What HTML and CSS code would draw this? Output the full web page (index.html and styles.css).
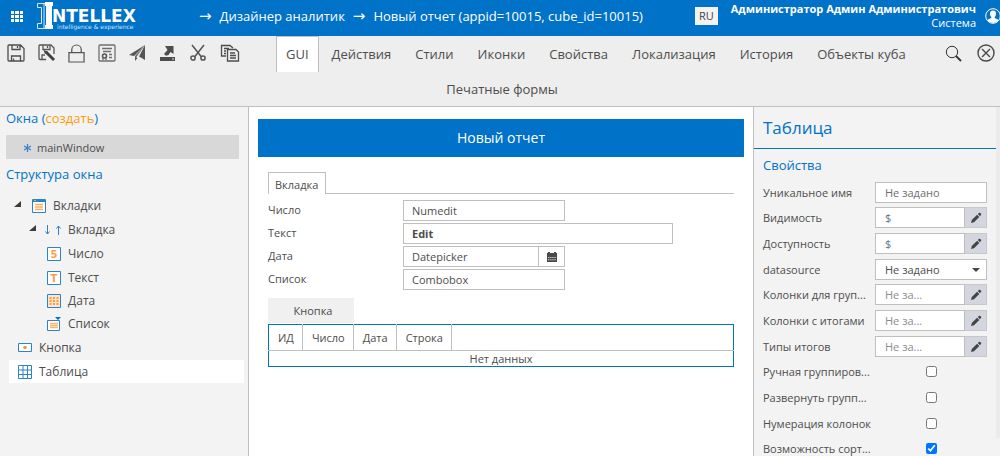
FILE: index.html
```html
<!DOCTYPE html>
<html lang="ru">
<head>
<meta charset="utf-8">
<title>Дизайнер аналитик</title>
<link rel="stylesheet" href="styles.css">
</head>
<body>
<svg width="0" height="0" class="defs" aria-hidden="true">
  <symbol id="pencil" viewBox="0 0 12 12"><path d="M1 11l.8-3 5.3-5.3 2.2 2.2L4 10.2zM7.8 2l1.4-1.2q.6-.3 1 .1l.9.9q.4.5 0 1L9.9 4.2z" fill="#444"/></symbol>
  <symbol id="caret" viewBox="0 0 8 8"><path d="M7 1v6H0z" fill="#3c3c3c"/></symbol>
</svg>
<div class="app">
  <header class="header">
    <button class="apps" aria-label="Меню">
      <svg width="13" height="11" viewBox="0 0 13 11" fill="#fff"><path d="M0 0h3v3H0zM4 0h4v3H4zM9 0h3v3H9zM0 4h3v3H0zM4 4h4v3H4zM9 4h3v3H9zM0 8h3v3H0zM4 8h4v3H4zM9 8h3v3H9z"/></svg>
    </button>
    <svg class="logo" width="104" height="30" viewBox="0 0 104 30">
      <path d="M9 2.500H.500V6.500H4.500V22.500H.500V27.500H9M7 3V27" fill="none" stroke="#d6e8f7"/>
      <path d="M8 1H16V5H15V24H16V28H8V24H9V5H8z" fill="#fff"/>
      <text x="15" y="21" class="logo-name">NTELLEX</text>
      <text x="20" y="28" class="logo-sub">intelligence &amp; experience</text>
    </svg>
    <nav class="crumbs"><span class="arrow">→</span><a href="#">Дизайнер аналитик</a><span class="arrow">→</span><a href="#">Новый отчет (appid=10015, cube_id=10015)</a></nav>
    <button class="lang">RU</button>
    <div class="user"><strong>Администратор Админ Администратович</strong><span>Система</span></div>
    <svg class="avatar" width="16" height="16" viewBox="0 0 16 16"><circle cx="8" cy="8" r="7.300" fill="none" stroke="#fff"/><path d="M8 2.500c2.200 0 3.200 1.500 3 3.500-.1 1.500-.8 2.600-1.300 3v1c1.500.8 3.300.9 3.900 2.300A7 7 0 0 1 8 15a7 7 0 0 1-5.600-2.700C3 10.900 4.800 10.800 6.300 10V9C5.800 8.600 5.100 7.500 5 6c-.2-2 .8-3.500 3-3.500z" fill="#fff"/></svg>
  </header>

  <div class="toolbar">
    <div class="tools">
      <button aria-label="Сохранить"><svg width="18" height="18" viewBox="0 0 18 18" fill="none" stroke="#4d4d4d" stroke-width="1.300"><path d="M2 1h11.500L17 4.500V16q0 1-1 1H2q-1 0-1-1V2q0-1 1-1zM5 1v4.500h8V1M10.500 2v2M4.500 17v-5h9v5M6.500 14.500v2"/></svg></button>
      <button aria-label="Сохранить как"><svg width="18" height="18" viewBox="0 0 18 18" fill="none" stroke="#555" stroke-width="1.300"><path d="M8 15.500H2q-1 0-1-1V2q0-1 1-1h11l3 3v6M5 1v4.500h7V1M9.500 2v2M4 15v-4h3"/><path d="M8 8l8 8" stroke="#404040" stroke-width="3"/><path d="M5.500 6l4 1.500L7 10z" fill="#404040" stroke="none"/></svg></button>
      <button aria-label="Блокировка"><svg width="17" height="19" viewBox="0 0 18 20" fill="none" stroke="#555" stroke-width="1.300"><path d="M1 9h16v10H1zM4 9V6a5 5 0 0 1 10 0V9"/></svg></button>
      <button aria-label="Сертификат"><svg width="18" height="18" viewBox="0 0 18 18" fill="none" stroke="#707070" stroke-width="1.300"><rect x="1" y="1" width="16" height="16" rx="1"/><path d="M4 4.500h10M5 7.500h8M11 10.500h3M11 13.500h3M5 14v2M8 14v2"/><circle cx="6.500" cy="12" r="2" stroke="#555" stroke-width="1.600"/></svg></button>
      <button aria-label="Отправить"><svg width="18" height="18" viewBox="0 0 18 18" fill="#555"><path d="M17 1v15l-6-3.500L17 1zM17 1L1 11l5 1zM7 12.500V17l2.500-3z"/><path d="M17 1L7 12v3z" fill="#6b6b6b"/></svg></button>
      <button aria-label="Выгрузить"><svg width="18" height="18" viewBox="0 0 18 18" fill="#4d4d4d"><path d="M1 13h15v4H1z"/><path d="M6 2h8.500v8l-3-2-2 3-2.500.8L5 10l3.500-4z"/><path d="M13 15h2" stroke="#ddd"/></svg></button>
      <button aria-label="Вырезать"><svg width="18" height="18" viewBox="0 0 18 18" fill="none" stroke="#555" stroke-width="1.500"><path d="M3 1l9.500 12M15 1L5.500 13"/><circle cx="4" cy="14" r="2.100"/><circle cx="14" cy="14" r="2.100"/></svg></button>
      <button aria-label="Копировать"><svg width="20" height="18" viewBox="0 0 20 18" fill="none" stroke="#4d4d4d" stroke-width="1.300"><path d="M6 12H1.500V1.500H10L13 4M4 4.500h5M4 7h2M4 9.500h2"/><path d="M7.500 5.500H16L18.500 8v9h-11zM10 9h5M10 11.500h6M10 14h6"/></svg></button>
    </div>
    <nav class="tabs">
      <a class="active" href="#">GUI</a><a href="#">Действия</a><a href="#">Стили</a><a href="#">Иконки</a><a href="#">Свойства</a><a href="#">Локализация</a><a href="#">История</a><a href="#">Объекты куба</a>
    </nav>
    <div class="actions">
      <button aria-label="Поиск"><svg width="17" height="17" viewBox="0 0 17 17" fill="none" stroke="#333"><circle cx="7" cy="7" r="5.700"/><path d="M11 11l5 5" stroke-width="1.800"/></svg></button>
      <button aria-label="Закрыть"><svg width="18" height="18" viewBox="0 0 18 18" fill="none" stroke="#4a4a4a" stroke-width="1.400"><circle cx="9" cy="9" r="8"/><path d="M5 5l8 8M13 5l-8 8"/></svg></button>
    </div>
    <nav class="tabs second"><a href="#">Печатные формы</a></nav>
  </div>

  <div class="body">
    <aside class="left">
      <h2>Окна (<a href="#">создать</a>)</h2>
      <div class="window"><svg width="7" height="8" viewBox="0 0 7 8"><path d="M3.500 0v8M0 2l7 4M7 2L0 6" stroke="#3d86cc" stroke-width="1.300"/></svg>mainWindow</div>
      <h2>Структура окна</h2>
      <ul class="tree">
        <li><div class="node"><svg class="fold" width="8" height="8"><use href="#caret"/></svg><svg width="14" height="14" viewBox="0 0 14 14"><path d="M.500.500h13v13H.500z" fill="#fff" stroke="#2a83cb"/><path d="M1 1h12v2H1z" fill="#2a83cb"/><path d="M2 1h2v1H2z" fill="#ffa63d"/><path d="M3 5.500h8M3 8h8M3 10.500h8" stroke="#ffad5c" stroke-width="1.500"/></svg>Вкладки</div>
          <ul>
            <li><div class="node"><svg class="fold" width="8" height="8"><use href="#caret"/></svg><svg width="16" height="10" viewBox="0 0 16 10" fill="none" stroke="#2a83cb"><path d="M2.500 0v9M.500 6.500l2 2.500 2-2.500M13.500 10V1M11.500 3.500l2-2.500 2 2.500"/></svg>Вкладка</div>
              <ul class="leaves">
                <li><div class="node"><svg width="14" height="14" viewBox="0 0 14 14"><path d="M.500.500h13v13H.500z" fill="#fff" stroke="#2a83cb"/><text x="7" y="11" class="glyph">5</text></svg>Число</div></li>
                <li><div class="node"><svg width="14" height="14" viewBox="0 0 14 14"><path d="M.500.500h13v13H.500z" fill="#fff" stroke="#2a83cb"/><text x="7" y="11" class="glyph">T</text></svg>Текст</div></li>
                <li><div class="node"><svg width="14" height="14" viewBox="0 0 14 14"><path d="M.500.500h13v13H.500z" fill="#ffe6cf" stroke="#2a83cb"/><path d="M2.500 4h9M2.500 7h9M2.500 10h9" stroke="#ff9a3d" stroke-width="2" stroke-dasharray="2 1.500"/></svg>Дата</div></li>
                <li><div class="node"><svg width="14" height="14" viewBox="0 0 14 14"><path d="M.500 3.500h12v10H.500z" fill="#fff" stroke="#2a83cb"/><path d="M8 0h6l-3 3z" fill="#0070c8"/><path d="M3 6.500h8M3 8.500h8M3 10.500h8" stroke="#ffb56b" stroke-width="1.500"/></svg>Список</div></li>
              </ul>
            </li>
          </ul>
        </li>
        <li><div class="node"><svg width="14" height="10" viewBox="0 0 14 10"><path d="M.500.500h13v8H.500z" fill="#fff" stroke="#2a83cb"/><circle cx="7" cy="4.500" r="1.800" fill="#ff9332"/></svg>Кнопка</div></li>
        <li><div class="node selected"><svg width="14" height="14" viewBox="0 0 14 14"><path d="M.500.500h13v13H.500zM5 0v14M9.500 0v14M0 5h14M0 9.500h14" fill="none" stroke="#2a83cb"/></svg>Таблица</div></li>
      </ul>
    </aside>

    <main class="center">
      <h1>Новый отчет</h1>
      <div class="form">
        <div class="form-tabs"><button>Вкладка</button></div>
        <div class="fields">
          <label for="num">Число</label><input id="num" value="Numedit">
          <label for="txt">Текст</label><input id="txt" class="wide" value="Edit">
          <label for="date">Дата</label><div class="date"><input id="date" value="Datepicker"><button aria-label="Календарь"><svg width="10" height="10" viewBox="0 0 10 10"><path d="M0 1h1V0h2v1h4V0h2v1h1v9H0z" fill="#4a4a4a"/><path d="M1 5.500h8M1 7.800h8" stroke="#fff" stroke-width=".7" stroke-dasharray="1.500 .6"/></svg></button></div>
          <label for="combo">Список</label><input id="combo" value="Combobox">
        </div>
        <button class="push">Кнопка</button>
        <table class="grid">
          <thead><tr><th>ИД</th><th>Число</th><th>Дата</th><th>Строка</th><th class="rest"></th></tr></thead>
          <tbody><tr><td colspan="5">Нет данных</td></tr></tbody>
        </table>
      </div>
    </main>

    <aside class="right">
      <div class="props">
        <h2>Таблица</h2>
        <h3>Свойства</h3>
        <div class="rows">
          <div class="row"><label for="p1">Уникальное имя</label><div class="ctl"><input id="p1" placeholder="Не задано"></div></div>
          <div class="row"><label for="p2">Видимость</label><div class="ctl"><input id="p2" class="money" value="$"><button aria-label="Изменить"><svg width="12" height="12"><use href="#pencil"/></svg></button></div></div>
          <div class="row"><label for="p3">Доступность</label><div class="ctl"><input id="p3" class="money" value="$"><button aria-label="Изменить"><svg width="12" height="12"><use href="#pencil"/></svg></button></div></div>
          <div class="row"><label for="p4">datasource</label><div class="ctl"><select id="p4"><option>Не задано</option></select></div></div>
          <div class="row"><label for="p5">Колонки для груп...</label><div class="ctl"><input id="p5" class="soft" placeholder="Не за..."><button aria-label="Изменить"><svg width="12" height="12"><use href="#pencil"/></svg></button></div></div>
          <div class="row"><label for="p6">Колонки с итогами</label><div class="ctl"><input id="p6" class="soft" placeholder="Не за..."><button aria-label="Изменить"><svg width="12" height="12"><use href="#pencil"/></svg></button></div></div>
          <div class="row"><label for="p7">Типы итогов</label><div class="ctl"><input id="p7" class="soft" placeholder="Не за..."><button aria-label="Изменить"><svg width="12" height="12"><use href="#pencil"/></svg></button></div></div>
          <div class="row"><label for="p8">Ручная группиров...</label><div class="ctl"><input id="p8" type="checkbox"></div></div>
          <div class="row"><label for="p9">Развернуть групп...</label><div class="ctl"><input id="p9" type="checkbox"></div></div>
          <div class="row"><label for="p10">Нумерация колонок</label><div class="ctl"><input id="p10" type="checkbox"></div></div>
          <div class="row"><label for="p11">Возможность сорт...</label><div class="ctl"><input id="p11" type="checkbox" checked></div></div>
        </div>
      </div>
      <div class="track"></div>
    </aside>
  </div>
</div>
</body>
</html>
```
FILE: styles.css
```css
* { box-sizing: border-box; }
body { margin: 0; font: 12px/16px "Open Sans", "Noto Sans", sans-serif; color: #4d4d4d; }
button, input, select { font: inherit; color: inherit; margin: 0; border-radius: 0; }
button { background: none; border: 0; padding: 0; display: flex; align-items: center; justify-content: center; }
a { color: inherit; text-decoration: none; }
h1, h2, h3, ul { margin: 0; padding: 0; font-weight: 400; list-style: none; }
svg { display: block; flex: none; }
.defs { position: absolute; }
.app { display: flex; flex-direction: column; height: 100vh; overflow: hidden; }

.header { display: flex; flex: none; height: 36px; background: #0072c8; color: #fff; align-items: center; padding-left: 11px; overflow: hidden; }
.apps { margin-bottom: 4px; }
.logo { margin-left: 13px; margin-bottom: 4px; }
.logo-name { font: bold 17px "DejaVu Sans", sans-serif; fill: #fff; }
.logo-sub { font: 6px "DejaVu Sans", sans-serif; fill: #cfe4f6; }
.crumbs { display: flex; gap: 8px; margin-left: 58px; margin-bottom: 4px; font-size: 13px; align-items: center; white-space: nowrap; }
.crumbs .arrow { font-family: "DejaVu Sans", sans-serif; font-size: 15px; }
.lang { margin-left: auto; margin-bottom: 4px; width: 23px; height: 18px; background: #f3f3f3; color: #444; font-size: 11px; }
.user { display: flex; flex-direction: column; text-align: right; margin-left: 13px; font-size: 11px; line-height: 14px; margin-bottom: 4px; white-space: nowrap; }
.avatar { margin-left: 9px; margin-right: -1px; margin-bottom: 4px; }

.toolbar { display: grid; flex: none; grid-template-columns: auto 1fr auto; background: #eee; border-bottom: 1px solid #bfbfbf; }
.tools { display: flex; justify-content: space-between; width: 276px; padding: 0 36px 0 7px; height: 34px; align-items: center; }
.tabs { display: flex; gap: 2px; font-size: 13px; line-height: 35px; white-space: nowrap; }
.tabs a { padding: 0 10px; border: 1px solid transparent; border-bottom: 0; }
.tabs .active { padding: 0 9px; background: #fff; border-color: #bfbfbf; }
.second { grid-column: 1 / 4; justify-content: center; padding-left: 4px; line-height: 33px; }
.actions { display: flex; gap: 15px; padding-right: 5px; height: 34px; align-items: center; }

.body { display: grid; flex: 1; min-height: 0; grid-template-columns: 249px 1fr 247px; }
.left { background: #f3f3f3; border-right: 1px solid #bfbfbf; padding: 2px 4px 0 6px; }
.left h2 { font-size: 13px; line-height: 18px; color: #0072c8; }
.left h2 a { color: #ff9d0a; }
.window { display: flex; align-items: center; gap: 6px; height: 24px; margin: 8px 5px 6px 0; padding: 2px 0 0 18px; background: #d8d8d8; font-size: 11px; }
.tree { padding-top: 11px; margin-left: 3px; }
.node { display: flex; align-items: center; gap: 7px; height: 24px; padding-left: 9px; }
.tree > li > .node:has(.fold) { padding-left: 5px; }
.fold { margin-right: 3px; margin-bottom: 4px; }
.tree ul .node { padding-left: 20px; }
.tree ul .fold { margin-right: 1px; }
.tree .leaves { padding-bottom: 1px; }
.tree .leaves .node { height: 23px; padding-left: 38px; }
.tree .leaves li:first-child .node { height: 24px; }
.tree .selected { height: 23px; background: #fff; }
.glyph { font: bold 10px "DejaVu Sans", sans-serif; fill: #ff9d4a; text-anchor: middle; }

.center { padding: 12px 9px; font-size: 11px; min-width: 0; }
h1 { background: #0072c8; color: #fff; font-size: 14px; line-height: 38px; text-align: center; }
.form { padding: 15px 10px; }
.form-tabs { display: flex; border-bottom: 1px solid #bfbfbf; margin-bottom: 6px; }
.form-tabs button { height: 22px; padding: 2px 7px 0 6px; margin-bottom: -1px; background: #fff; border: 1px solid #bfbfbf; border-bottom: 0; }
.fields { display: grid; grid-template-columns: 135px 1fr; gap: 2px 0; align-items: center; }
.fields label { padding-bottom: 1px; }
input:not([type]), select { height: 21px; min-width: 0; background: #fff; border: 1px solid #bfbfbf; padding: 0 8px; outline: 0; }
.fields > input, .date { width: 162px; }
.fields > .wide { width: 270px; font-weight: 700; }
.date { display: flex; }
.date input { flex: 1; }
.date button { width: 26px; border: 1px solid #bfbfbf; border-left: 0; }
.push { background: #f0f0f0; height: 25px; width: 86px; margin: 8px 0 1px; padding-left: 4px; }
.grid { width: 100%; border-collapse: collapse; border: 1px solid #0072c8; line-height: 15px; }
.grid th { font-weight: 400; height: 26px; padding: 0 8px 0 9px; border: 1px solid #bfbfbf; border-top-color: #0072c8; }
.grid th:first-child { border-left-color: #0072c8; }
.grid .rest { width: 100%; border-right-color: #0072c8; }
.grid td { text-align: center; padding: 0; border-top: 1px solid #bfbfbf; }

.right { display: flex; background: #f3f3f3; border-left: 1px solid #bfbfbf; font-size: 11px; overflow: hidden; }
.props { flex: 1; min-width: 0; }
.track { width: 4px; height: 331px; background: #ebebeb; }
.props h2 { font-size: 17px; line-height: 41px; padding-left: 9px; color: #0072c8; border-bottom: 1px solid #0072c8; }
.props h3 { font-size: 13px; line-height: 18px; padding: 7px 9px 8px; color: #0072c8; }
.rows { padding: 0 9px; }
.row { display: flex; gap: 1px; height: 26px; align-items: flex-start; }
.row:nth-child(3n+1) { height: 25px; }
.row label { flex: none; width: 111px; line-height: 21px; white-space: nowrap; }
.ctl { flex: 1; display: flex; min-width: 0; height: 21px; align-items: center; justify-content: center; }
.ctl input:not([type]), .ctl select { flex: 1; padding: 0 9px; }
.ctl button { width: 22px; height: 21px; border: 1px solid #c8c8c8; border-left: 0; background: #d3d6df; }
.ctl ::placeholder { color: #6e6e6e; opacity: 1; }
.ctl .soft::placeholder { color: #8c8c8c; }
.ctl .money { color: #5f7388; }
.ctl select { appearance: none; }
.ctl:has(select) { position: relative; }
.ctl:has(select)::after { content: ""; position: absolute; right: 7px; top: 9px; border: 4px solid transparent; border-top-color: #444; border-bottom: 0; }
.ctl [type=checkbox] { width: 11px; height: 11px; }
```
